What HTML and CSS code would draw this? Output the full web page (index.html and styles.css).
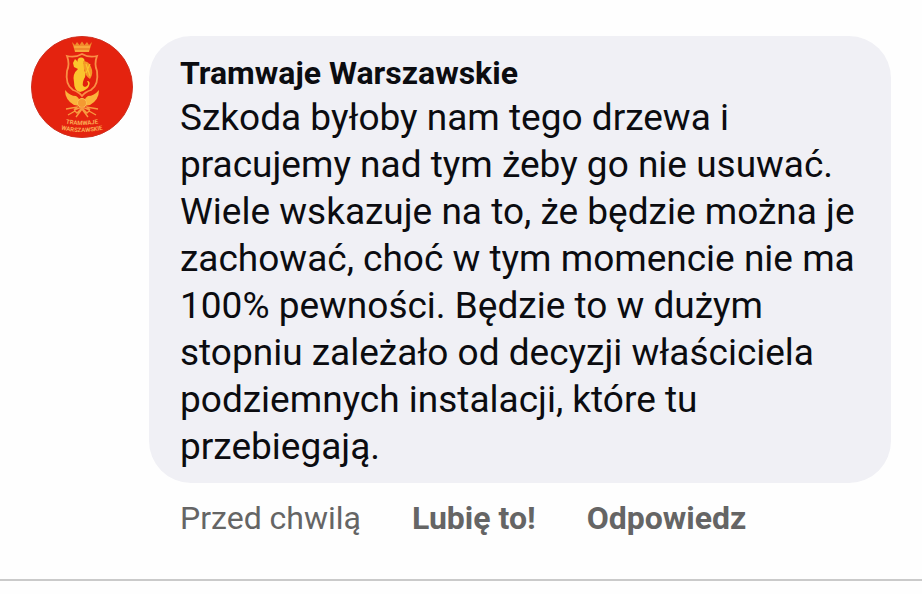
FILE: index.html
```
<!DOCTYPE html>
<html lang="pl">

<head>
    <meta charset="utf-8">
    <meta name="viewport" content="width=device-width, initial-scale=1">
    <title>Komentarz</title>
    <link rel="stylesheet" href="styles.css">
</head>

<body>

    <article class="comment">
        <svg class="avatar" viewBox="0 0 102 102" role="img" aria-label="Tramwaje Warszawskie">
            <circle cx="51" cy="51" r="50.500" fill="#e4230f" stroke="#cf3020"/>
            <!-- crown -->
            <path d="M41 6 L44 16 H58 L61 6 L58 9 L56 6 L53.500 9 L51 5.500 L48.500 9 L46 6 L44 9 Z" fill="#f08a2c"/>
            <path d="M44 15 H58 M43 11 H59" stroke="#fbb040" stroke-width="1.500"/>
            <!-- shield -->
            <path d="M36 20 Q44 22 51 18 Q58 22 66 20 Q63 28 66 35 Q68 49 60 54 Q54 56 51 60 Q48 56 42 54 Q34 49 36 35 Q39 28 36 20 Z" fill="#e2200f" stroke="#fa8f45" stroke-width="1.800"/>
            <!-- mermaid -->
            <circle cx="50" cy="25" r="3.500" fill="#fbc52d"/>
            <path d="M48 27 L44 23 L42 27 L43 31 L47 33 Q41 38 43 46 Q43 55 49 56 Q56 54 58 50 Q60 45 56 45 Q59 49 54 51 Q50 50 53 43 Q56 38 53 34 L53 28 Z" fill="#fbc52d"/>
            <path d="M52 25 Q58 25 60 31 Q63 37 59 43 Q54 40 53 33 Z" fill="#f49a26"/>
            <path d="M55 28 L59 40 M59 28 L55 37" stroke="#fbc52d" stroke-width="1.200"/>
            <!-- wings and wheel -->
            <path d="M34 54 Q34 64 43 69 L49 70 Q50 63 45 60 Q39 60 34 54 Z M68 54 Q68 64 59 69 L53 70 Q52 63 57 60 Q63 60 68 54 Z" fill="#fbb43c"/>
            <circle cx="51" cy="67" r="4.500" fill="#f49a32" stroke="#fbc052"/>
            <path d="M35 73 L46 71 L43 74 L51 71 L59 74 L56 71 L67 73 M37 79 L44 75 L46 77 L51 72 L56 77 L58 75 L65 79 M45 81 L51 73 L57 81" fill="none" stroke="#f89a40" stroke-width="1.400"/>
            <path id="arc-top" d="M33 87 Q51 91 69 87" fill="none"/>
            <path id="arc-bottom" d="M28 93 Q51 99 74 93" fill="none"/>
            <text class="logo-text"><textPath href="#arc-top" startOffset="50%">TRAMWAJE</textPath></text>
            <text class="logo-text"><textPath href="#arc-bottom" startOffset="50%">WARSZAWSKIE</textPath></text>
        </svg>

        <div class="content">
            <div class="bubble">
                <h2 class="author">Tramwaje Warszawskie</h2>
                <p class="message">Szkoda byłoby nam tego drzewa i pracujemy nad tym żeby go nie usuwać. Wiele wskazuje na to, że będzie można je zachować, choć w tym momencie nie ma 100% pewności. Będzie to w dużym stopniu zależało od decyzji właściciela podziemnych instalacji, które tu przebiegają.</p>
            </div>
            <div class="actions">
                <span class="time">Przed chwilą</span>
                <button type="button" class="action">Lubię to!</button>
                <button type="button" class="action">Odpowiedz</button>
            </div>
        </div>
    </article>

</body>

</html>
```

FILE: styles.css
```
body {
    margin: 0;
    background-color: #fefefe;
    font-family: Roboto, "Liberation Sans", sans-serif;
}

.comment {
    display: flex;
    gap: 16px;
    padding: 36px 31px 41px;
    border-bottom: 2px solid #cacaca;
}

.avatar {
    flex: none;
    width: 102px;
    height: 102px;
}

.logo-text {
    font-size: 6px;
    font-weight: bold;
    text-anchor: middle;
    fill: #fbab55;
}

.content {
    flex: 1;
}

.bubble {
    padding: 16px 31px 13px;
    border-radius: 42px;
    background-color: #f0f0f5;
    color: #0b0c10;
}

.author {
    margin: 0;
    font-size: 32px;
    line-height: 42px;
}

.message {
    margin: 0;
    font-size: 37px;
    line-height: 47px;
}

.actions {
    display: flex;
    gap: 51px;
    padding: 15px 31px 0;
    color: #656565;
    font-size: 32px;
    line-height: 40px;
}

.action {
    padding: 0;
    border: none;
    background: none;
    color: inherit;
    font: inherit;
    font-weight: bold;
    cursor: pointer;
}
```
